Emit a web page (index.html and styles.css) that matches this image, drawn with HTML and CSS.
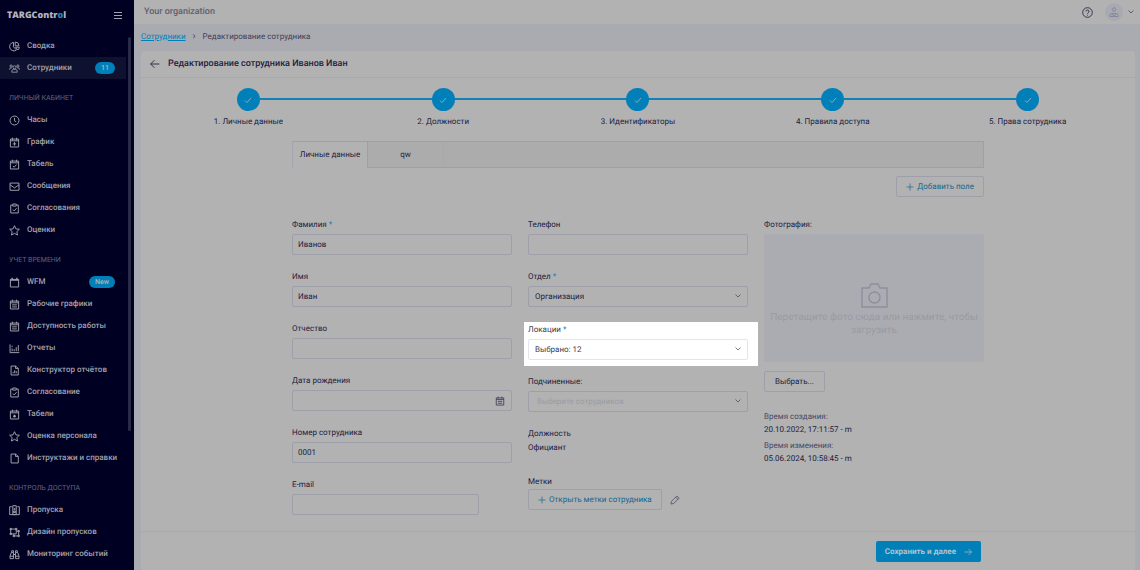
FILE: index.html
```html
<!DOCTYPE html>
<html lang="ru">
<head>
<meta charset="utf-8">
<meta name="viewport" content="width=device-width, initial-scale=1">
<title>TARGControl — Редактирование сотрудника</title>
<link rel="stylesheet" href="styles.css">
</head>
<body>
<svg class="sprite" aria-hidden="true">
  <symbol id="i-pie" viewBox="0 0 16 16"><path d="M6.5 2a6.2 6.2 0 1 0 4.5 11L6.500 8.500z"/><path d="M9 1.500v5.500h5.500A5.500 5.500 0 0 0 9 1.500zM9.500 9H15a6 6 0 0 1-1.800 4z"/></symbol>
  <symbol id="i-users" viewBox="0 0 18 16"><circle cx="9" cy="6" r="2.500"/><circle cx="3.500" cy="4" r="1.800"/><circle cx="14.500" cy="4" r="1.800"/><path d="M4.500 14v-1.500a3 3 0 0 1 3-3h3a3 3 0 0 1 3 3V14zM1 10V9a2 2 0 0 1 2-2h1.500M17 10V9a2 2 0 0 0-2-2h-1.500"/></symbol>
  <symbol id="i-clock" viewBox="0 0 16 16"><circle cx="8" cy="8" r="6.500"/><path d="M8 4v4.500l2.500 1.500"/></symbol>
  <symbol id="i-calplus" viewBox="0 0 16 16"><path d="M2 3h12v11.500H2zM5 1v4M11 1v4M2 5.500h12M8 7.500v5M5.500 10h5"/></symbol>
  <symbol id="i-calcheck" viewBox="0 0 16 16"><path d="M2 3h12v11.500H2zM5 1v3M11 1v3M2 5.500h12M5.500 10l2 2 3.500-4"/></symbol>
  <symbol id="i-mail" viewBox="0 0 16 16"><path d="M1.500 3h13v10.500h-13zM1.500 5.500L8 10l6.500-4.500"/></symbol>
  <symbol id="i-clip" viewBox="0 0 16 16"><path d="M5.500 3H2.500v11.500h11V3h-3M5.500 1.500h5v3h-5zM5.500 9.500l2 2 3.500-4"/></symbol>
  <symbol id="i-star" viewBox="0 0 16 16"><path d="M8 1l2.100 4.600 5 .6-3.700 3.400 1 5L8 12.100l-4.400 2.500 1-5L.9 6.200l5-.6z"/></symbol>
  <symbol id="i-cal" viewBox="0 0 16 16"><path d="M2 3.500h12v11H2z"/><path d="M2 4.500h12M4.500 1v3M11.500 1v3" stroke-width="2"/></symbol>
  <symbol id="i-callines" viewBox="0 0 16 16"><path d="M2 3h12v11.500H2zM5 1v3M11 1v3M2 5.500h12M4.500 8.500h7M4.500 11.500h7"/></symbol>
  <symbol id="i-chart" viewBox="0 0 16 16"><path d="M1.500 2v12H15M4.500 12V8M7.500 12V9M10.500 12V6M13.500 12V3M4.500 6V4"/></symbol>
  <symbol id="i-filechart" viewBox="0 0 16 16"><path d="M3 1.500h6.500L13.500 5v9.500H3zM9.500 1.500V5h4M6 12v-2M8.300 12V7.500M10.600 12V9"/></symbol>
  <symbol id="i-calstar" viewBox="0 0 16 16"><path d="M2 3h12v11.500H2zM5 1v3M11 1v3M2 5.500h12"/><path d="M8 8.500v4M6 10.500h4" stroke-width="2"/></symbol>
  <symbol id="i-file" viewBox="0 0 16 16"><path d="M3 1.500h6.500L13.500 5v9.500H3zM9.500 1.500V5h4"/></symbol>
  <symbol id="i-badge" viewBox="0 0 16 16"><path d="M4 2.500H1v11.500h14V2.500h-3M5.500 1h5v13h-5z"/><circle cx="8" cy="6" r="1"/><path d="M6.500 11V9h3v2z"/></symbol>
  <symbol id="i-design" viewBox="0 0 16 16"><path d="M2.500 3h8v7h-8zM10.500 6H14v7H7v-3"/><path d="M1.500 2h2v2h-2zM9.500 2h2v2h-2zM1.500 9h2v2h-2zM13 5h2v2h-2zM13 12h2v2h-2zM6 12h2v2H6z"/></symbol>
  <symbol id="i-binoc" viewBox="0 0 16 16"><path d="M1.500 14v-4L3.500 5h3v9zM14.500 14v-4l-2-5h-3v9zM6.500 8h3M4 5V2.500h2.500V5M9.500 5V2.500H12V5M1.500 10.500h5M9.500 10.500h5"/></symbol>
  <symbol id="i-check" viewBox="0 0 16 16"><path d="M2 9l4 4 8-9"/></symbol>
  <symbol id="i-down" viewBox="0 0 16 16"><path d="M3 5l5 5 5-5"/></symbol>
  <symbol id="i-plus" viewBox="0 0 16 16"><path d="M8 1v14M1 8h14"/></symbol>
  <symbol id="i-left" viewBox="0 0 16 16"><path d="M15 8H1M7 2L1 8l6 6"/></symbol>
  <symbol id="i-right" viewBox="0 0 16 16"><path d="M1 8h14M9 2l6 6-6 6"/></symbol>
  <symbol id="i-help" viewBox="0 0 16 16"><circle cx="8" cy="8" r="7"/><path d="M5.800 6.500a2.200 2.200 0 1 1 3.200 2C8.200 9 8 9.300 8 10M8 11.300v1.200"/></symbol>
  <symbol id="i-camera" viewBox="0 0 28 26"><path d="M2 5h7l2-4h7l2 4h7v19H2z"/><circle cx="14.500" cy="14.500" r="5.500"/></symbol>
  <symbol id="i-pencil" viewBox="0 0 16 16"><path d="M1.500 14.500l1-4.500L11 1.500l3.500 3.500L6 13.500zM9 3.500L12.500 7"/></symbol>
</svg>

<div class="app">
  <aside class="sidebar">
    <div class="brand">
      <span class="logo">TARGContr<span class="logo-o">o</span>l</span>
      <button class="burger" type="button" aria-label="Меню"><span></span><span></span><span></span></button>
    </div>
    <nav class="nav">
      <ul class="menu">
        <li><a class="item" href="#"><svg><use href="#i-pie"/></svg>Сводка</a></li>
        <li><a class="item current" href="#"><svg><use href="#i-users"/></svg>Сотрудники<span class="pill">11</span></a></li>
      </ul>
      <h2 class="heading">ЛИЧНЫЙ КАБИНЕТ</h2>
      <ul class="menu">
        <li><a class="item" href="#"><svg><use href="#i-clock"/></svg>Часы</a></li>
        <li><a class="item" href="#"><svg><use href="#i-calplus"/></svg>График</a></li>
        <li><a class="item" href="#"><svg><use href="#i-calcheck"/></svg>Табель</a></li>
        <li><a class="item" href="#"><svg><use href="#i-mail"/></svg>Сообщения</a></li>
        <li><a class="item" href="#"><svg><use href="#i-clip"/></svg>Согласования</a></li>
        <li><a class="item" href="#"><svg><use href="#i-star"/></svg>Оценки</a></li>
      </ul>
      <h2 class="heading">УЧЕТ ВРЕМЕНИ</h2>
      <ul class="menu">
        <li><a class="item" href="#"><svg><use href="#i-cal"/></svg>WFM<span class="pill">New</span></a></li>
        <li><a class="item" href="#"><svg><use href="#i-callines"/></svg>Рабочие графики</a></li>
        <li><a class="item" href="#"><svg><use href="#i-callines"/></svg>Доступность работы</a></li>
        <li><a class="item" href="#"><svg><use href="#i-chart"/></svg>Отчеты</a></li>
        <li><a class="item" href="#"><svg><use href="#i-filechart"/></svg>Конструктор отчётов</a></li>
        <li><a class="item" href="#"><svg><use href="#i-clip"/></svg>Согласование</a></li>
        <li><a class="item" href="#"><svg><use href="#i-calstar"/></svg>Табели</a></li>
        <li><a class="item" href="#"><svg><use href="#i-star"/></svg>Оценка персонала</a></li>
        <li><a class="item" href="#"><svg><use href="#i-file"/></svg>Инструктажи и справки</a></li>
      </ul>
      <h2 class="heading">КОНТРОЛЬ ДОСТУПА</h2>
      <ul class="menu">
        <li><a class="item" href="#"><svg><use href="#i-badge"/></svg>Пропуска</a></li>
        <li><a class="item" href="#"><svg><use href="#i-design"/></svg>Дизайн пропусков</a></li>
        <li><a class="item" href="#"><svg><use href="#i-binoc"/></svg>Мониторинг событий</a></li>
      </ul>
    </nav>
    <div class="scroll-thumb"></div>
  </aside>

  <div class="page">
    <header class="topbar">
      <span class="org">Your organization</span>
      <button class="icon-btn" type="button" aria-label="Помощь"><svg class="s11"><use href="#i-help"/></svg></button>
      <button class="user" type="button" aria-label="Профиль">
        <svg class="avatar" viewBox="0 0 18 18"><circle class="avatar-bg" cx="9" cy="9" r="9"/><circle cx="9" cy="6.500" r="1.700"/><path d="M5 13.500v-1a2 2 0 0 1 2-2h4a2 2 0 0 1 2 2v1zM7 11l2 2 2-2"/></svg>
        <svg class="s8"><use href="#i-down"/></svg>
      </button>
    </header>
    <nav class="crumbs" aria-label="Путь">
      <a href="#">Сотрудники</a><span class="sep">›</span><span>Редактирование сотрудника</span>
    </nav>

    <main class="card">
      <div class="card-head">
        <button class="icon-btn" type="button" aria-label="Назад"><svg class="s10"><use href="#i-left"/></svg></button>
        <h1>Редактирование сотрудника Иванов Иван</h1>
      </div>

      <ol class="steps">
        <li><span class="dot"><svg class="s8"><use href="#i-check"/></svg></span>1. Личные данные</li>
        <li><span class="dot"><svg class="s8"><use href="#i-check"/></svg></span>2. Должности</li>
        <li><span class="dot"><svg class="s8"><use href="#i-check"/></svg></span>3. Идентификаторы</li>
        <li><span class="dot"><svg class="s8"><use href="#i-check"/></svg></span>4. Правила доступа</li>
        <li><span class="dot"><svg class="s8"><use href="#i-check"/></svg></span>5. Права сотрудника</li>
      </ol>

      <div class="content">
        <div class="tabs" role="tablist">
          <button class="tab active" type="button" role="tab" aria-selected="true">Личные данные</button>
          <button class="tab" type="button" role="tab" aria-selected="false">qw</button>
          <span class="tabs-rest"></span>
        </div>
        <div class="tools"><button class="btn link" type="button"><svg class="s8"><use href="#i-plus"/></svg>Добавить поле</button></div>

        <form class="columns">
          <div class="col">
            <div class="field"><label for="surname">Фамилия <b>*</b></label><input id="surname" type="text" value="Иванов"></div>
            <div class="field"><label for="name">Имя</label><input id="name" type="text" value="Иван"></div>
            <div class="field"><label for="patronymic">Отчество</label><input id="patronymic" type="text"></div>
            <div class="field"><label for="birth">Дата рождения</label>
              <div class="control"><input id="birth" type="text"><svg class="inner cal"><use href="#i-callines"/></svg></div></div>
            <div class="field"><label for="number">Номер сотрудника</label><input id="number" type="text" value="0001"></div>
            <div class="field short"><label for="email">E-mail</label><input id="email" type="email"></div>
          </div>

          <div class="col">
            <div class="field"><label for="phone">Телефон</label><input id="phone" type="tel"></div>
            <div class="field"><label for="dept">Отдел <b>*</b></label>
              <div class="control"><select id="dept"><option>Организация</option></select><svg class="inner s8"><use href="#i-down"/></svg></div></div>
            <div class="field spotlight"><label for="loc">Локации <b>*</b></label>
              <div class="control"><select id="loc"><option>Выбрано: 12</option></select><svg class="inner s8"><use href="#i-down"/></svg></div></div>
            <div class="field"><label for="subs">Подчиненные:</label>
              <div class="control"><select id="subs" class="empty"><option>Выберите сотрудников</option></select><svg class="inner s8"><use href="#i-down"/></svg></div></div>
            <div class="position"><span>Должность</span><span>Официант</span></div>
            <div class="marks"><span>Метки</span>
              <div class="marks-row"><button class="btn link" type="button"><svg class="s8"><use href="#i-plus"/></svg>Открыть метки сотрудника</button>
              <button class="icon-btn pencil" type="button" aria-label="Изменить"><svg class="s10"><use href="#i-pencil"/></svg></button></div></div>
          </div>

          <div class="col photo">
            <span>Фотография:</span>
            <div class="drop"><svg class="camera"><use href="#i-camera"/></svg><p>Перетащите фото сюда или нажмите, чтобы загрузить</p></div>
            <button class="btn" type="button">Выбрать...</button>
            <dl class="times">
              <dt>Время создания:</dt><dd>20.10.2022, 17:11:57 - m</dd>
              <dt>Время изменения:</dt><dd>05.06.2024, 10:58:45 - m</dd>
            </dl>
          </div>
        </form>
      </div>

      <footer class="card-foot">
        <button class="save" type="button">Сохранить и далее<svg class="s8"><use href="#i-right"/></svg></button>
      </footer>
    </main>
  </div>
</div>
</body>
</html>
```

FILE: styles.css
```css
* { box-sizing: border-box; }
body {
  margin: 0;
  font: 8px/14px Roboto, "Noto Sans", sans-serif;
  text-rendering: geometricPrecision;
  color: #21213f;
  background: #aaabb1;
}
ul, ol, dl, dd, h1, h2, p { margin: 0; padding: 0; list-style: none; }
button, input, select { font: inherit; color: inherit; text-rendering: inherit; }
button { cursor: pointer; }
svg { flex: none; fill: none; stroke: currentColor; stroke-width: 1.4; }
.sprite { display: none; }
.s8 { width: 8px; height: 8px; }
.s10 { width: 10px; height: 10px; }
.s11 { width: 11px; height: 11px; }

.app { display: flex; min-height: 100vh; }

/* Sidebar */
.sidebar {
  position: relative;
  flex: none;
  width: 134px;
  height: 100vh;
  overflow: hidden;
  background: #000022;
  color: #a2a2ad;
}
.brand {
  display: flex;
  align-items: center;
  justify-content: space-between;
  height: 30px;
  padding: 0 12px 0 7px;
}
.logo { font: 800 9px/14px "Open Sans", sans-serif; color: #b4b4bb; }
.logo-o { color: #2186b4; }
.burger {
  display: grid;
  gap: 2px;
  width: 8px;
  padding: 0;
  border: 0;
  background: none;
}
.burger span { height: 1px; background: #a2a2ad; }
.nav { padding-top: 5px; margin-right: 8px; }
.item {
  display: flex;
  align-items: center;
  gap: 7px;
  height: 22px;
  padding: 0 11px 0 9px;
  color: inherit;
  font-weight: 500;
  text-decoration: none;
  white-space: nowrap;
}
.item svg { width: 11px; height: 11px; }
.current { background: #0e1230; }
.pill {
  margin-left: auto;
  padding: 0 6px;
  border-radius: 6px;
  background: #007fb9;
  color: #b2b2b2;
  font-size: 7px;
  line-height: 12px;
}
.heading {
  padding: 13px 9px 5px;
  color: #62627a;
  font-size: 7px;
  font-weight: 400;
  line-height: 12px;
}
.scroll-thumb {
  position: absolute;
  top: 37px;
  right: 3px;
  width: 3px;
  height: 394px;
  border-radius: 2px;
  background: #292a45;
}

/* Page frame */
.page { flex: 1; min-width: 0; display: flex; flex-direction: column; }
.topbar {
  display: flex;
  align-items: center;
  height: 24px;
  padding: 0 5px 0 10px;
  background: #b2b2b2;
  color: #33334f;
}
.org { margin-right: auto; color: #5f6070; font-size: 9px; font-weight: 500; }
.icon-btn { display: flex; padding: 0; border: 0; background: none; }
.user { display: flex; align-items: center; gap: 4px; padding: 0; margin-left: 12px; border: 0; background: none; }
.avatar { width: 18px; height: 18px; stroke: #85879a; stroke-width: 1; }
.avatar-bg { fill: #a8a9b1; stroke: none; }
.crumbs {
  display: flex;
  align-items: center;
  gap: 7px;
  height: 27px;
  padding: 0 7px 2px;
  color: #40405a;
}
.crumbs a { color: #007fb9; }
.sep { font-size: 10px; }

.card { flex: 1; display: flex; flex-direction: column; margin: 0 5px 0 7px; background: #b2b2b2; border-radius: 3px 3px 0 0; }
.card-head { display: flex; align-items: center; gap: 8px; height: 27px; padding: 0 9px; border-bottom: 1px solid #a9a9af; }
.card-head h1 { font-size: 9px; font-weight: 500; line-height: 14px; }

/* Steps */
.steps { display: grid; grid-template-columns: repeat(5, 1fr); padding: 10px 10px 0; }
.steps li { position: relative; display: flex; flex-direction: column; align-items: center; gap: 4px; }
.steps li + li::before {
  content: "";
  position: absolute;
  top: 10px;
  right: 50%;
  width: 100%;
  height: 2px;
  background: #1480b3;
}
.dot {
  position: relative;
  z-index: 1;
  display: grid;
  place-items: center;
  width: 23px;
  height: 23px;
  border-radius: 50%;
  background: #007fb9;
  color: #b2c4cc;
}

/* Tabs */
.content { width: 100%; max-width: 692px; margin: 12px auto 0; }
.tabs { display: flex; height: 27px; }
.tab { min-width: 76px; padding: 0; border: 1px solid #9e9fab; border-right-color: #a7a7ac; border-left: 0; background: #acacac; }
.tab.active { border-left: 1px solid #a4a5b0; border-right-color: #9e9fab; border-bottom: 0; background: none; }
.tabs-rest { flex: 1; border: 1px solid #9e9fab; border-left: 0; background: #acacac; }
.tools { display: flex; justify-content: flex-end; margin-top: 8px; }
.btn {
  display: inline-flex;
  align-items: center;
  justify-content: center;
  gap: 3px;
  height: 21px;
  padding: 0 10px;
  border: 1px solid #9e9fab;
  border-radius: 2px;
  background: none;
}
.link { padding: 0 9px; color: #12678f; }

/* Form */
.columns { display: grid; grid-template-columns: repeat(3, 1fr); gap: 16px; margin-top: 21px; }
.col { display: flex; flex-direction: column; gap: 15px; }
.field { display: flex; flex-direction: column; gap: 2px; }
.field b { color: #007fb9; font-weight: 400; }
.short { margin-right: 33px; }
.field input, .field select {
  display: block;
  width: 100%;
  height: 21px;
  padding: 0 6px;
  border: 1px solid #9e9fab;
  border-radius: 2px;
  outline: 0;
  background: none;
  appearance: none;
}
.field input { padding: 0 5px; }
.control { position: relative; }
.inner { position: absolute; top: 6px; right: 6px; pointer-events: none; color: #40405a; }
.cal { width: 10px; height: 10px; right: 7px; }
.field .empty { padding-left: 8px; color: #9a9ba4; }
.spotlight {
  margin: 0 -10px -6px -4px;
  padding: 1px 10px 6px 4px;
  background: #fff;
  color: #3c3c52;
}
.spotlight select { border-color: #e4e5ec; }
.position, .marks { display: flex; flex-direction: column; }
.marks { margin-top: 5px; }
.marks-row { display: flex; align-items: center; gap: 8px; }
.pencil { color: #55566a; }

.photo { align-items: flex-start; gap: 2px; }
.drop {
  display: flex;
  flex-direction: column;
  align-items: center;
  justify-content: flex-end;
  width: 100%;
  height: 128px;
  margin-bottom: 7px;
  padding: 0 4px 25px;
  border-radius: 2px;
  background: #abacb2;
  color: #999aa2;
  font-size: 10px;
  line-height: 13px;
  text-align: center;
}
.camera { width: 28px; height: 26px; margin-bottom: 2px; color: #8d8f9c; }
.times { margin-top: 16px; line-height: 13px; }
.times dt { color: #484862; }
.times dd { margin-bottom: 3px; }

.card-foot { display: flex; justify-content: flex-end; margin-top: auto; padding: 9px 154px 8px; border-top: 1px solid #a9a9af; }
.save {
  display: flex;
  align-items: center;
  gap: 8px;
  height: 21px;
  padding: 0 9px;
  border: 0;
  border-radius: 2px;
  background: #007fb9;
  color: #b2c4cc;
  font-weight: 700;
}
```
